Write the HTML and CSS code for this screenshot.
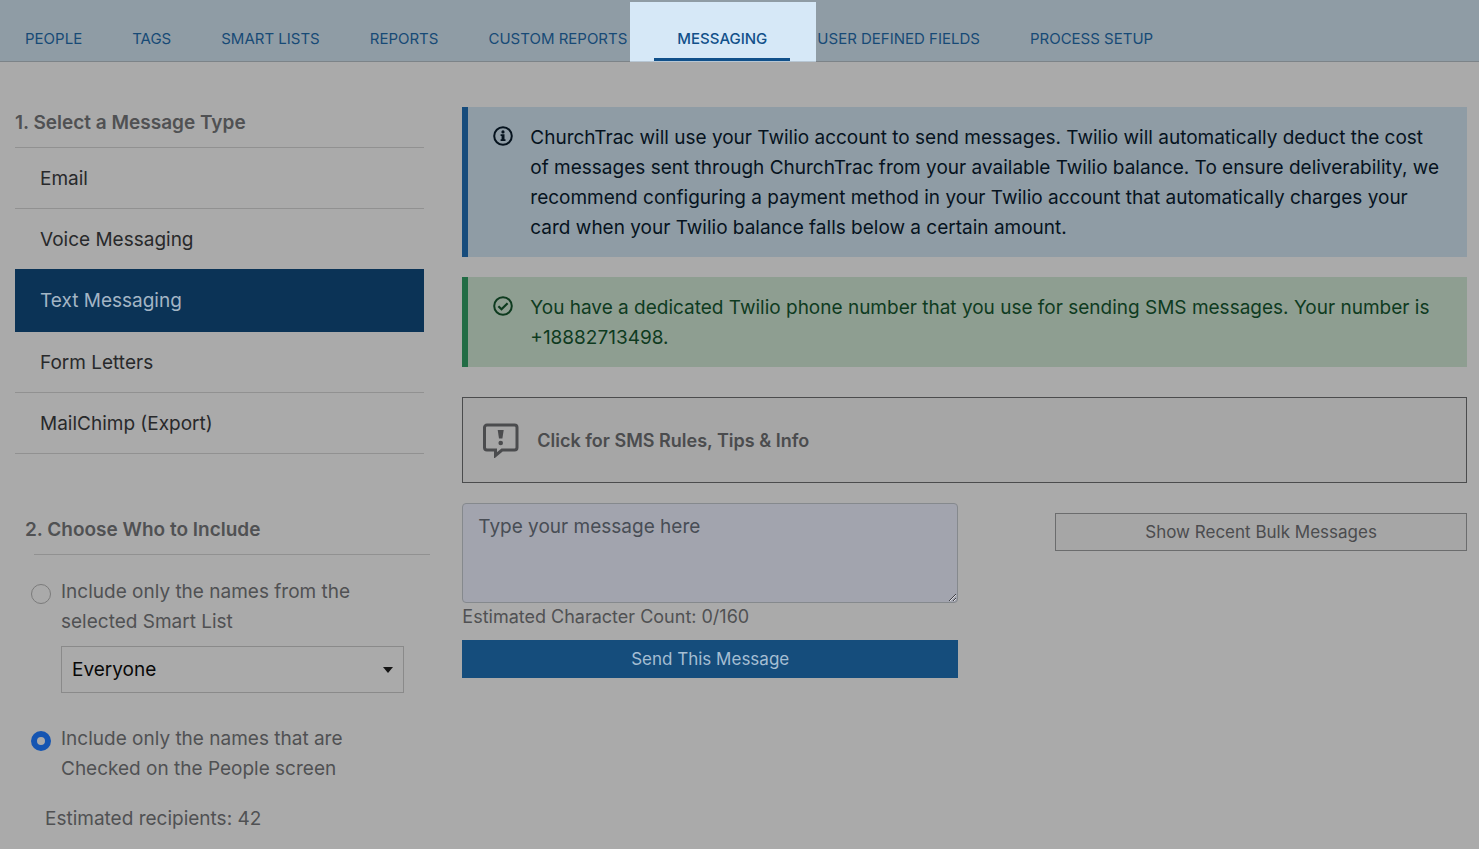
FILE: index.html
```html
<!DOCTYPE html>
<html lang="en">
  <head>
    <meta charset="UTF-8" />
    <meta name="viewport" content="width=device-width, initial-scale=1" />
    <title>Messaging</title>
    <link rel="stylesheet" href="styles.css">
  </head>

  <body>
    <!-- top tabs -->
    <nav class="tabs">
        <a href="#" class="tab">PEOPLE</a>
        <a href="#" class="tab">TAGS</a>
        <a href="#" class="tab">SMART LISTS</a>
        <a href="#" class="tab">REPORTS</a>
        <a href="#" class="tab">CUSTOM REPORTS</a>
        <a href="#" class="tab active">MESSAGING</a>
        <a href="#" class="tab">USER DEFINED FIELDS</a>
        <a href="#" class="tab">PROCESS SETUP</a>
    </nav>

    <div class="container">
        <!-- left column -->
        <aside>
            <h2 class="type-title">1. Select a Message Type</h2>
            <div class="type-list">
                <a href="#" class="type">Email</a>
                <a href="#" class="type">Voice Messaging</a>
                <a href="#" class="type active">Text Messaging</a>
                <a href="#" class="type">Form Letters</a>
                <a href="#" class="type">MailChimp (Export)</a>
            </div>

            <form class="include">
                <h2>2. Choose Who to Include</h2>
                <hr>
                <div class="option">
                    <input type="radio" name="include" id="smartList">
                    <label for="smartList">Include only the names from the selected Smart List</label>
                </div>
                <select class="list-select" aria-label="Smart List">
                    <option>Everyone</option>
                </select>
                <div class="option">
                    <input type="radio" name="include" id="checkedNames" checked>
                    <label for="checkedNames">Include only the names that are Checked on the People screen</label>
                </div>
                <p class="recipients">Estimated recipients: 42</p>
            </form>
        </aside>

        <!-- right column -->
        <main>
            <div class="alert info">
                <svg class="alert-icon" viewBox="0 0 20 20" aria-hidden="true">
                    <circle cx="10" cy="10" r="8.8" fill="none" stroke="currentColor" stroke-width="2" />
                    <circle cx="10" cy="5.9" r="1.6" fill="currentColor" />
                    <path d="M7.6 8.3h3.9v4.9h1v1.7H7.6v-1.7h1V10h-1z" fill="currentColor" />
                </svg>
                <p>ChurchTrac will use your Twilio account to send messages. Twilio will automatically deduct the cost of messages sent through ChurchTrac from your available Twilio balance. To ensure deliverability, we recommend configuring a payment method in your Twilio account that automatically charges your card when your Twilio balance falls below a certain amount.</p>
            </div>

            <div class="alert success">
                <svg class="alert-icon" viewBox="0 0 20 20" aria-hidden="true">
                    <circle cx="10" cy="10" r="8.8" fill="none" stroke="currentColor" stroke-width="2" />
                    <path d="M5.4 10.2l3.1 3.1 6.1-6.1" fill="none" stroke="currentColor" stroke-width="2.2" />
                </svg>
                <p>You have a dedicated Twilio phone number that you use for sending SMS messages. Your number is +18882713498.</p>
            </div>

            <button type="button" class="rules">
                <svg class="rules-icon" viewBox="0 0 36 36" aria-hidden="true">
                    <path d="M4 3h27.500a2.500 2.500 0 0 1 2.500 2.500v20a2.500 2.500 0 0 1-2.500 2.500H19l-6.500 5.500V28H4a2.500 2.500 0 0 1-2.500-2.500v-20A2.500 2.500 0 0 1 4 3z" fill="none" stroke="currentColor" stroke-width="3" />
                    <path d="M14.700 8h6l-1.300 8.500h-3.400z" fill="currentColor" />
                    <circle cx="17.700" cy="21" r="2.300" fill="currentColor" />
                </svg>
                Click for SMS Rules, Tips &amp; Info
            </button>

            <div class="compose">
                <form>
                    <textarea class="message" placeholder="Type your message here" aria-label="Message"></textarea>
                    <p class="count">Estimated Character Count: 0/160</p>
                    <button type="button" class="send">Send This Message</button>
                </form>
                <button type="button" class="recent">Show Recent Bulk Messages</button>
            </div>
        </main>
    </div>
  </body>
</html>
```

FILE: styles.css
```css
* {
    box-sizing: border-box;
    margin: 0;
    padding: 0;
}
body {
    background-color: #aaaaaa;
    color: #505153;
    font-family: Inter, "Liberation Sans", sans-serif;
    font-size: 19px;
    line-height: 30px;
}
a {
    text-decoration: none;
}
button, select, textarea {
    font-family: inherit;
    border-radius: 0;
}

/* tabs */
.tabs {
    display: flex;
    height: 62px;
    padding-top: 16px;
    background-color: #8f9ca5;
    border-bottom: 1px solid #7c8388;
}
.tab {
    position: relative;
    z-index: 0;
    margin: 0 2px;
    padding: 0 23px;
    color: #174a76;
    font-size: 15px;
    line-height: 45px;
    white-space: nowrap;
}
.tab.active {
    color: #11508a;
    font-weight: 500;
}
/* light box behind the open tab */
.tab.active::before {
    content: "";
    position: absolute;
    z-index: -1;
    top: -14px;
    right: -26px;
    bottom: -1px;
    left: -24px;
    background-color: #d6e8f7;
    border-bottom: 1px solid #b7c6d3;
}
/* line under the open tab */
.tab.active::after {
    content: "";
    position: absolute;
    right: 0;
    bottom: 0;
    left: 0;
    height: 3px;
    background-color: #11508a;
}

.container {
    display: grid;
    grid-template-columns: 11fr 27fr;
    gap: 38px;
    padding: 45px 12px 15px 15px;
}

/* left column */
h2 {
    padding-top: 1px;
    font-size: 19px;
    font-weight: 600;
}
.type-title {
    padding-bottom: 9px;
    border-bottom: 1px solid #919191;
}
.type {
    display: block;
    padding: 16px 25px 14px;
    border-bottom: 1px solid #919191;
    color: #28292b;
}
.type.active {
    margin-top: -1px;
    padding: 17px 25px 16px;
    border-bottom: none;
    background-color: #0b3356;
    color: #a3b5c5;
}
.include {
    margin: 60px 0 0 10px;
}
.include hr {
    margin: 9px -6px 22px 9px;
    border: none;
    border-top: 1px solid #919191;
}
.option {
    display: flex;
    align-items: flex-start;
    gap: 10px;
    padding: 0 20px 0 6px;
}
.option input {
    appearance: none;
    flex: none;
    width: 20px;
    height: 20px;
    margin-top: 7px;
    border: 1px solid #7b7b7b;
    border-radius: 50%;
}
.option input:checked {
    border: 6px solid #1555b2;
}
.list-select {
    appearance: none;
    display: block;
    width: calc(100% - 56px);
    height: 47px;
    margin: 9px 0 31px 36px;
    padding: 0 10px;
    border: 1px solid #8a8a8a;
    background: url("data:image/svg+xml,%3Csvg xmlns='http://www.w3.org/2000/svg' viewBox='0 0 10 6'%3E%3Cpath d='M0 0h10L5 6z' fill='%23151515'/%3E%3C/svg%3E") no-repeat right 10px center / 10px 6px;
    color: #080808;
    font-size: 19px;
}
.recipients {
    margin: 20px 0 0 20px;
}

/* right column */
.alert {
    display: flex;
    align-items: flex-start;
    gap: 17px;
    margin-bottom: 20px;
    padding: 16px 25px 14px;
    border-left: 6px solid;
}
.alert-icon {
    flex: none;
    width: 20px;
    height: 20px;
    margin-top: 3px;
}
.info {
    background-color: #8f9ca5;
    border-left-color: #174c7c;
    color: #06131e;
}
.success {
    background-color: #8e9e91;
    border-left-color: #226c45;
    color: #0e3b1f;
}
.rules {
    display: flex;
    align-items: center;
    gap: 18px;
    width: 100%;
    height: 86px;
    margin: 30px 0 20px;
    padding: 0 20px;
    border: 1px solid #4b4c4d;
    background-color: #a6a6a6;
    color: #4b4c4e;
    font-size: 18px;
    font-weight: 600;
}
.rules-icon {
    width: 36px;
    height: 36px;
}
.compose {
    display: grid;
    grid-template-columns: 65fr 54fr;
    align-items: start;
    gap: 97px;
}
.message {
    display: block;
    width: 100%;
    height: 100px;
    padding: 8px 15px;
    border: 1px solid #85898d;
    border-radius: 4px;
    background-color: #a2a4ae;
    font-size: 19px;
    line-height: 30px;
}
.message::placeholder {
    color: #484d55;
}
.count {
    padding-bottom: 9px;
    font-size: 18px;
    line-height: 28px;
}
.send, .recent {
    width: 100%;
    height: 38px;
    font-size: 17px;
}
.send {
    border: none;
    background-color: #154d7c;
    color: #a5bed3;
}
.recent {
    margin-top: 10px;
    border: 1px solid #6b6c6d;
    background-color: #a6a6a6;
    color: #4b4c4e;
}
```
